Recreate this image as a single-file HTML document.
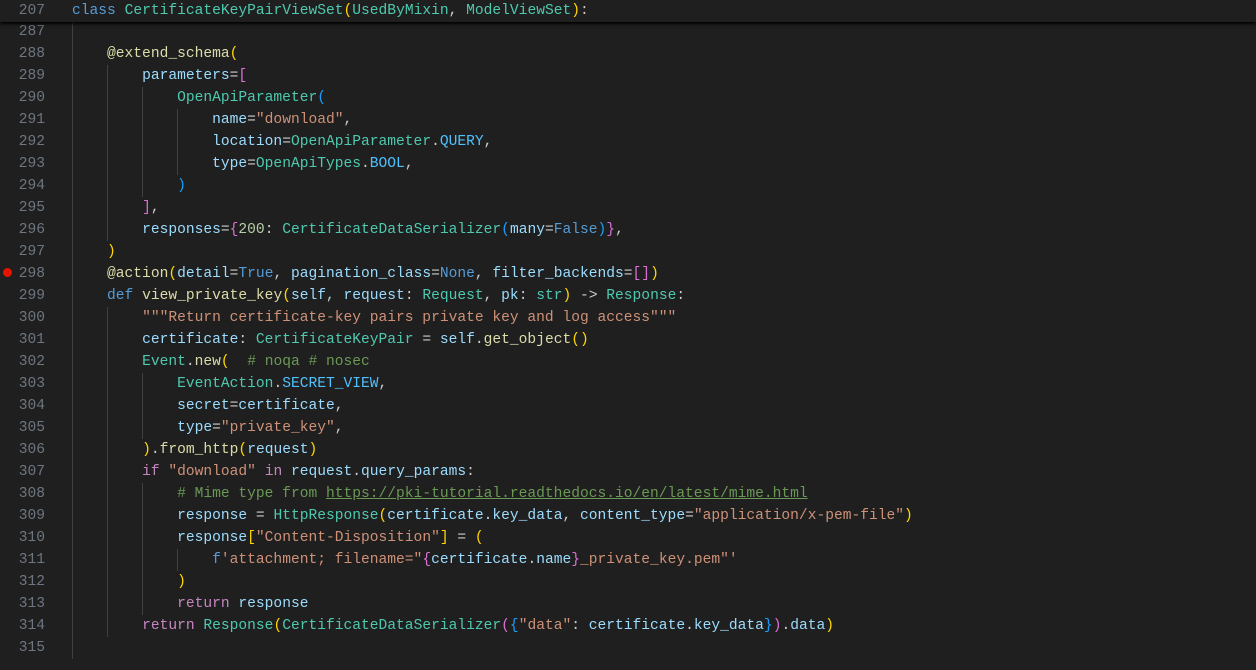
<!DOCTYPE html>
<html><head><meta charset="utf-8"><style>
html,body{margin:0;padding:0;background:#1f1f1f;width:1256px;height:670px;overflow:hidden}
.ln,.code{position:absolute;font-family:"Liberation Mono",monospace;font-size:14.6px;line-height:22px;white-space:pre}
.ln{left:0;width:45px;text-align:right;color:#6e7681}
.code{left:72px;color:#cccccc}
.k{color:#569cd6}.c{color:#4ec9b0}.v{color:#9cdcfe}.f{color:#dcdcaa}.s{color:#ce9178}.m{color:#6a9955}.n{color:#b5cea8}.p{color:#c586c0}.q{color:#4fc1ff}
.b1{color:#ffd700}.b2{color:#da70d6}.b3{color:#179fff}
.u{text-decoration:underline}
.g{position:absolute;width:1px;background:#404040}
#sticky{position:absolute;left:0;top:0;width:1256px;height:22px;background:#1f1f1f;box-shadow:0 2px 3px #000;z-index:5}
.dot{position:absolute;left:3px;top:268px;width:9px;height:9px;border-radius:50%;background:#e51400}
</style></head><body>
<div class="g" style="left:72px;top:21px;height:638px"></div>
<div class="g" style="left:107px;top:65px;height:176px"></div>
<div class="g" style="left:107px;top:307px;height:330px"></div>
<div class="g" style="left:142px;top:87px;height:110px"></div>
<div class="g" style="left:142px;top:373px;height:66px"></div>
<div class="g" style="left:142px;top:483px;height:132px"></div>
<div class="g" style="left:177px;top:109px;height:66px"></div>
<div class="g" style="left:177px;top:549px;height:22px"></div>
<div class="dot"></div>
<div class="ln" style="top:21px">287
288
289
290
291
292
293
294
295
296
297
298
299
300
301
302
303
304
305
306
307
308
309
310
311
312
313
314
315</div>
<div class="code" style="top:21px">
    <span class="f">@extend_schema</span><span class="b1">(</span>
        <span class="v">parameters</span>=<span class="b2">[</span>
            <span class="c">OpenApiParameter</span><span class="b3">(</span>
                <span class="v">name</span>=<span class="s">"download"</span>,
                <span class="v">location</span>=<span class="c">OpenApiParameter</span>.<span class="q">QUERY</span>,
                <span class="v">type</span>=<span class="c">OpenApiTypes</span>.<span class="q">BOOL</span>,
            <span class="b3">)</span>
        <span class="b2">]</span>,
        <span class="v">responses</span>=<span class="b2">{</span><span class="n">200</span>: <span class="c">CertificateDataSerializer</span><span class="b3">(</span><span class="v">many</span>=<span class="k">False</span><span class="b3">)</span><span class="b2">}</span>,
    <span class="b1">)</span>
    <span class="f">@action</span><span class="b1">(</span><span class="v">detail</span>=<span class="k">True</span>, <span class="v">pagination_class</span>=<span class="k">None</span>, <span class="v">filter_backends</span>=<span class="b2">[]</span><span class="b1">)</span>
    <span class="k">def</span> <span class="f">view_private_key</span><span class="b1">(</span><span class="v">self</span>, <span class="v">request</span>: <span class="c">Request</span>, <span class="v">pk</span>: <span class="c">str</span><span class="b1">)</span> -&gt; <span class="c">Response</span>:
        <span class="s">"""Return certificate-key pairs private key and log access"""</span>
        <span class="v">certificate</span>: <span class="c">CertificateKeyPair</span> = <span class="v">self</span>.<span class="f">get_object</span><span class="b1">()</span>
        <span class="c">Event</span>.<span class="f">new</span><span class="b1">(</span>  <span class="m"># noqa # nosec</span>
            <span class="c">EventAction</span>.<span class="q">SECRET_VIEW</span>,
            <span class="v">secret</span>=<span class="v">certificate</span>,
            <span class="v">type</span>=<span class="s">"private_key"</span>,
        <span class="b1">)</span>.<span class="f">from_http</span><span class="b1">(</span><span class="v">request</span><span class="b1">)</span>
        <span class="p">if</span> <span class="s">"download"</span> <span class="p">in</span> <span class="v">request</span>.<span class="v">query_params</span>:
            <span class="m"># Mime type from <span class="u">https://pki-tutorial.readthedocs.io/en/latest/mime.html</span></span>
            <span class="v">response</span> = <span class="c">HttpResponse</span><span class="b1">(</span><span class="v">certificate</span>.<span class="v">key_data</span>, <span class="v">content_type</span>=<span class="s">"application/x-pem-file"</span><span class="b1">)</span>
            <span class="v">response</span><span class="b1">[</span><span class="s">"Content-Disposition"</span><span class="b1">]</span> = <span class="b1">(</span>
                <span class="k">f</span><span class="s">'attachment; filename="</span><span class="b2">{</span><span class="v">certificate</span>.<span class="v">name</span><span class="b2">}</span><span class="s">_private_key.pem"'</span>
            <span class="b1">)</span>
            <span class="p">return</span> <span class="v">response</span>
        <span class="p">return</span> <span class="c">Response</span><span class="b1">(</span><span class="c">CertificateDataSerializer</span><span class="b2">(</span><span class="b3">{</span><span class="s">"data"</span>: <span class="v">certificate</span>.<span class="v">key_data</span><span class="b3">}</span><span class="b2">)</span>.<span class="v">data</span><span class="b1">)</span>
</div>
<div id="sticky">
<div class="ln" style="top:0">207</div>
<div class="code" style="top:0"><span class="k">class</span> <span class="c">CertificateKeyPairViewSet</span><span class="b1">(</span><span class="c">UsedByMixin</span>, <span class="c">ModelViewSet</span><span class="b1">)</span>:</div>
</div>
</body></html>
